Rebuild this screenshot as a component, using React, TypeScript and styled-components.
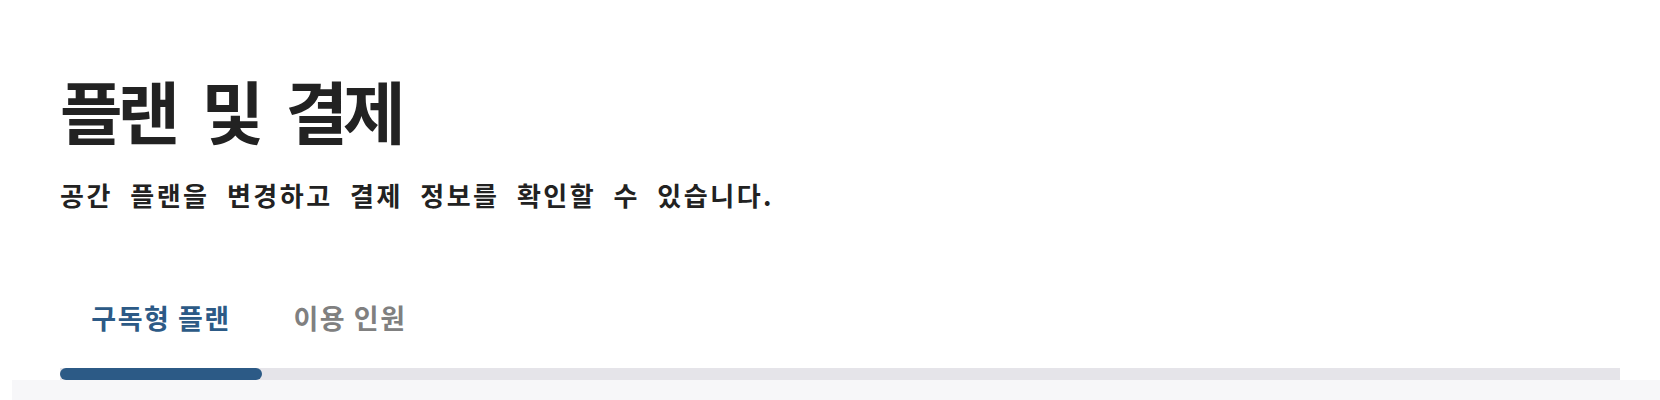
import React, { useState } from "react";
import styled, { createGlobalStyle } from "styled-components";

const palette = {
  text: "#222222",
  blue: "#2c5a86",
  gray: "#808080",
  track: "#e5e4e9",
  bg: "#f7f7f9",
};

const GlobalStyle = createGlobalStyle`
  html, body {
    margin: 0;
    padding: 0;
    background: #ffffff;
  }
  body {
    font-family: "Noto Sans CJK KR", "Noto Sans", sans-serif;
    color: ${palette.text};
  }
`;

const Page = styled.div`
  display: flex;
  flex-direction: column;
  min-height: 400px;
  padding-left: 12px;
`;

const Header = styled.header`
  padding: 70px 40px 0 48px;
`;

const Title = styled.h1`
  margin: 0;
  font-size: 68px;
  line-height: 80px;
  font-weight: 700;
  letter-spacing: -5px;
  word-spacing: 16px;
  color: ${palette.text};
`;

const Description = styled.p`
  margin: 30px 0 0;
  font-size: 26px;
  line-height: 30px;
  font-weight: 600;
  letter-spacing: 2.5px;
  word-spacing: 9px;
  color: ${palette.text};
`;

const Tabs = styled.nav`
  margin-top: 92px;
  display: flex;
  flex-direction: column;
`;

const TabRow = styled.div`
  display: flex;
`;

const Tab = styled.button<{ $active: boolean }>`
  padding: 0 0 34px;
  border: none;
  background: transparent;
  font-family: inherit;
  font-size: 27px;
  line-height: 32px;
  font-weight: 700;
  letter-spacing: 1.5px;
  color: ${(p) => (p.$active ? palette.blue : palette.gray)};
  cursor: pointer;
`;

const Track = styled.div`
  height: 12px;
  background: ${palette.track};
  display: flex;
`;

const Indicator = styled.div`
  height: 100%;
  background: ${palette.blue};
  border-radius: 6px;
`;

const Content = styled.main`
  flex: 1;
  background: ${palette.bg};
`;

const tabs = [
  { id: "plan", label: "구독형 플랜", width: 202 },
  { id: "members", label: "이용 인원", width: 176 },
];

export default function App() {
  const [active, setActive] = useState("plan");
  const current = tabs.find((t) => t.id === active)!;
  const offset = tabs
    .slice(0, tabs.indexOf(current))
    .reduce((sum, t) => sum + t.width, 0);

  return (
    <>
      <GlobalStyle />
      <Page>
        <Header>
          <Title>플랜 및 결제</Title>
          <Description>공간 플랜을 변경하고 결제 정보를 확인할 수 있습니다.</Description>
          <Tabs>
            <TabRow>
              {tabs.map((t) => (
                <Tab
                  key={t.id}
                  $active={t.id === active}
                  style={{ width: t.width }}
                  onClick={() => setActive(t.id)}
                >
                  {t.label}
                </Tab>
              ))}
            </TabRow>
            <Track>
              <Indicator style={{ width: current.width, marginLeft: offset }} />
            </Track>
          </Tabs>
        </Header>
        <Content />
      </Page>
    </>
  );
}
